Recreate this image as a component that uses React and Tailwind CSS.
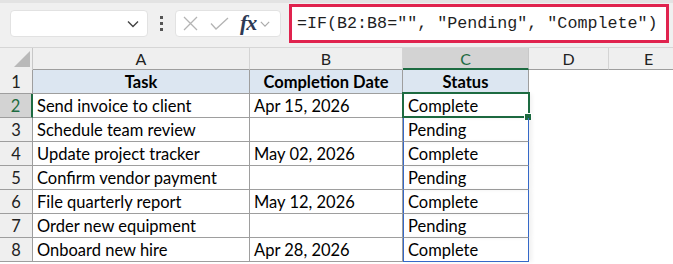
import React from 'react';

const rows = [
  { task: "Send invoice to client", date: "Apr 15, 2026", status: "Complete" },
  { task: "Schedule team review", date: "", status: "Pending" },
  { task: "Update project tracker", date: "May 02, 2026", status: "Complete" },
  { task: "Confirm vendor payment", date: "", status: "Pending" },
  { task: "File quarterly report", date: "May 12, 2026", status: "Complete" },
  { task: "Order new equipment", date: "", status: "Pending" },
  { task: "Onboard new hire", date: "Apr 28, 2026", status: "Complete" },
];

function Chevron({ className }) {
  return (
    <svg className={className} width="12" height="8" viewBox="0 0 12 8" fill="none" stroke="currentColor" strokeWidth="1.4">
      <path d="M1 1.5l5 5 5-5" />
    </svg>
  );
}

function Toolbar() {
  return (
    <div className="h-[47px] bg-[#f0f0f0] border-t-[3px] border-[#e3e3e3] flex items-start">
      <div className="ml-[10px] mt-[7px] w-[138px] h-[27px] bg-white rounded-[4px] border border-[#e2e2e2] flex items-center justify-end pr-[8px]">
        <Chevron className="text-[#444]" />
      </div>
      <div className="w-[27px] mt-[13px] flex flex-col items-center gap-[3px]">
        <span className="w-[3px] h-[3px] bg-[#555]" />
        <span className="w-[3px] h-[3px] bg-[#555]" />
        <span className="w-[3px] h-[3px] bg-[#555]" />
      </div>
      <div className="mt-[7px] w-[106px] h-[27px] bg-white rounded-[4px] border border-[#e2e2e2] flex items-center pl-[7px]">
        <svg width="15" height="15" viewBox="0 0 15 15" stroke="#b4b4b4" strokeWidth="1.3">
          <path d="M1 1l13 13M14 1L1 14" />
        </svg>
        <svg className="ml-[12px]" width="19" height="13" viewBox="0 0 19 13" fill="none" stroke="#b4b4b4" strokeWidth="1.3">
          <path d="M1 6.5l5 5.5L18 1" />
        </svg>
        <span className="ml-[11px] text-[22px] leading-none italic font-bold text-[#2d3a55] tracking-[-1px] -mt-[2px]" style={{ fontFamily: '"Liberation Serif", serif' }}>fx</span>
        <Chevron className="ml-[4px] text-[#aaa] w-[10px]" />
      </div>
      <div className="ml-[8px] mt-[1px] w-[380px] h-[39px] border-[3px] border-[#e0234e] bg-white flex items-center pl-[5px]">
        <span className="text-[16.7px] text-[#1f1f1f] whitespace-pre" style={{ fontFamily: '"Liberation Mono", monospace' }}>=IF(B2:B8="", "Pending", "Complete")</span>
      </div>
    </div>
  );
}

export default function App() {
  const cols = [
    { k: "A", w: "w-[217px]" },
    { k: "B", w: "w-[153px]" },
    { k: "C", w: "w-[126px]" },
    { k: "D", w: "w-[80px]" },
    { k: "E", w: "w-[80px]" },
  ];
  return (
    <div className="w-[673px] h-[264px] overflow-hidden bg-white text-[16.5px] text-black" style={{ fontFamily: 'Lato, "Liberation Sans", sans-serif' }}>
      <Toolbar />
      {/* column headers */}
      <div className="flex h-[23px] bg-[#efefef] border-t border-[#d6d6d6] text-[16px]">
        <div className="w-[33px] shrink-0 border-r border-[#c8c8c8] relative">
          <svg className="absolute left-[14px] top-[3px]" width="16" height="16" viewBox="0 0 16 16">
            <path d="M16 0V16H0Z" fill="#b9b9b9" />
          </svg>
        </div>
        {cols.map((c) =>
          c.k === "C" ? (
            <div key={c.k} className={`${c.w} shrink-0 bg-[#d3d3d3] border-r border-[#c8c8c8] border-b-2 border-b-[#1d6b41] text-[#1d6b41] flex items-center justify-center pt-[1px]`}>{c.k}</div>
          ) : (
            <div key={c.k} className={`${c.w} shrink-0 border-r border-[#d4d4d4] border-b border-b-[#9e9e9e] flex items-center justify-center text-[#222] pt-[1px]`}>{c.k}</div>
          )
        )}
      </div>
      {/* row 1 */}
      <div className="flex h-[24px]">
        <div className="w-[33px] shrink-0 bg-[#efefef] border-r border-b border-[#9e9e9e] flex items-center justify-center text-[#222] pt-[2px]">1</div>
        <div className="w-[217px] shrink-0 bg-[#dce6f1] border-r border-b border-[#9e9e9e] flex items-center justify-center font-bold pt-[2px]">Task</div>
        <div className="w-[153px] shrink-0 bg-[#dce6f1] border-r border-b border-[#9e9e9e] flex items-center justify-center font-bold pt-[2px]">Completion Date</div>
        <div className="w-[126px] shrink-0 bg-[#dce6f1] border-r border-b border-[#9e9e9e] flex items-center justify-center font-bold pt-[2px]">Status</div>
      </div>
      {rows.map((r, i) => {
        const sel = i === 0;
        const last = i === rows.length - 1;
        return (
          <div key={i} className="flex h-[24px]">
            <div className={sel
              ? "w-[33px] shrink-0 bg-[#d3d3d3] border-r-2 border-r-[#1d6b41] border-b border-b-[#9e9e9e] flex items-center justify-center text-[#1d6b41] pt-[2px]"
              : "w-[33px] shrink-0 bg-[#efefef] border-r border-b border-[#9e9e9e] flex items-center justify-center text-[#222] pt-[2px]"}>{i + 2}</div>
            <div className="w-[217px] shrink-0 border-r border-b border-[#9e9e9e] flex items-center pl-[4px] pt-[2px]">{r.task}</div>
            <div className="w-[153px] shrink-0 border-r border-b border-[#9e9e9e] flex items-center pl-[4px] pt-[2px]">{r.date}</div>
            <div className={`w-[126px] shrink-0 relative flex items-center pl-[4px] pt-[2px] border-l border-l-[#3568c8] border-r border-r-[#3568c8] ${last ? "border-b border-b-[#3568c8]" : "border-b border-b-[#9e9e9e]"} shadow-[3px_0_4px_rgba(0,0,0,0.06)]`}>
              {r.status}
              {sel && (
                <>
                  <div className="absolute -left-[2px] -top-[2px] -right-[2px] -bottom-[1px] border-2 border-[#1d6b41]" />
                  <div className="absolute -right-[4px] -bottom-[4px] w-[6px] h-[6px] bg-[#1d6b41] border border-white box-content" />
                </>
              )}
            </div>
          </div>
        );
      })}
    </div>
  );
}
